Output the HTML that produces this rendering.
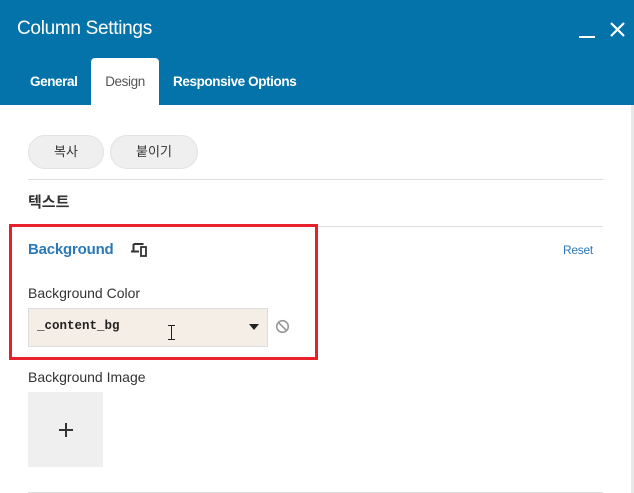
<!DOCTYPE html>
<html><head><meta charset="utf-8"><style>
*{box-sizing:border-box;margin:0;padding:0}
body{width:634px;height:493px;overflow:hidden;background:#fff;font-family:"Liberation Sans","Noto Sans CJK KR",sans-serif;position:relative;color:#333}
.hdr{position:absolute;left:0;top:0;width:634px;height:105px;background:#0473aa}
.title{position:absolute;left:17px;top:18px;color:#fff;font-size:19px;letter-spacing:-0.3px}
.tab{position:absolute;top:58px;height:47px;line-height:47px;font-size:13.5px;color:#fff;font-weight:bold;letter-spacing:-0.4px;white-space:nowrap}
.tab.act{background:#fff;color:#555;font-weight:normal;border-radius:4px 4px 0 0;left:91px;width:68px;text-align:center}
.abs{position:absolute}
.btn{position:absolute;top:135px;height:34px;border-radius:17px;background:#efefef;border:1px solid #e2e2e2;font-size:13px;text-align:center;line-height:32px;color:#333}
.line{position:absolute;left:28px;width:575px;height:1px;background:#ddd}
.sb{position:absolute;right:0;top:105px;width:3px;height:388px;background:#e8e8e8}
</style></head><body>
<div class="hdr">
<div class="title">Column Settings</div>
<div class="abs" style="left:579px;top:36px;width:16px;height:2px;background:#fff"></div>
<svg class="abs" style="left:609px;top:21px" width="17" height="17"><path d="M2 2L15 15M15 2L2 15" stroke="#fff" stroke-width="2.2"/></svg>
<div class="tab" style="left:30px">General</div>
<div class="tab act">Design</div>
<div class="tab" style="left:173px">Responsive Options</div>
</div>
<div class="btn" style="left:28px;width:76px">복사</div>
<div class="btn" style="left:110px;width:88px">붙이기</div>
<div class="line" style="top:179px"></div>
<div class="abs" style="left:28px;top:191px;font-size:15px;color:#333;font-weight:bold">텍스트</div>
<div class="line" style="top:226px"></div>
<div class="abs" style="left:9px;top:224px;width:309px;height:136px;border:3px solid #e8202a"></div>
<div class="abs" style="left:28px;top:241px;font-size:15px;color:#2b78b8;font-weight:bold;letter-spacing:-0.2px">Background</div>
<svg class="abs" style="left:130px;top:241px" width="20" height="17"><path d="M3.5 3h10M3.5 3v7M1 10.5h8" stroke="#333" stroke-width="2" fill="none"/><rect x="11" y="6" width="5" height="9" stroke="#333" stroke-width="1.8" fill="none"/></svg>
<div class="abs" style="left:563px;top:243px;font-size:12px;color:#2b78b8;letter-spacing:-0.3px">Reset</div>
<div class="abs" style="left:28px;top:285px;font-size:14px;color:#333">Background Color</div>
<div class="abs" style="left:28px;top:308px;width:240px;height:39px;background:#f5eee7;border:1px solid #ddd"></div>
<div class="abs" style="left:37px;top:319px;font-family:'Liberation Mono',monospace;font-size:12.5px;font-weight:bold;color:#222">_content_bg</div>
<div class="abs" style="left:171px;top:325px;width:1px;height:14px;background:#222"></div>
<div class="abs" style="left:168px;top:325px;width:7px;height:1px;background:#222"></div>
<div class="abs" style="left:168px;top:339px;width:7px;height:1px;background:#222"></div>
<svg class="abs" style="left:249px;top:324px" width="10" height="6"><path d="M0 0h10L5 6z" fill="#222"/></svg>
<svg class="abs" style="left:275px;top:319px" width="15" height="15"><circle cx="7.5" cy="7.5" r="5.8" stroke="#999" stroke-width="1.6" fill="none"/><path d="M3.5 3.5L11.5 11.5" stroke="#999" stroke-width="1.6"/></svg>
<div class="abs" style="left:28px;top:369px;font-size:14px;color:#333">Background Image</div>
<div class="abs" style="left:28px;top:392px;width:75px;height:75px;background:#efefef"></div>
<div class="abs" style="left:59px;top:429px;width:14px;height:2px;background:#333"></div>
<div class="abs" style="left:65px;top:423px;width:2px;height:14px;background:#333"></div>
<div class="line" style="top:492px"></div>
<div class="sb"></div>
</body></html>
